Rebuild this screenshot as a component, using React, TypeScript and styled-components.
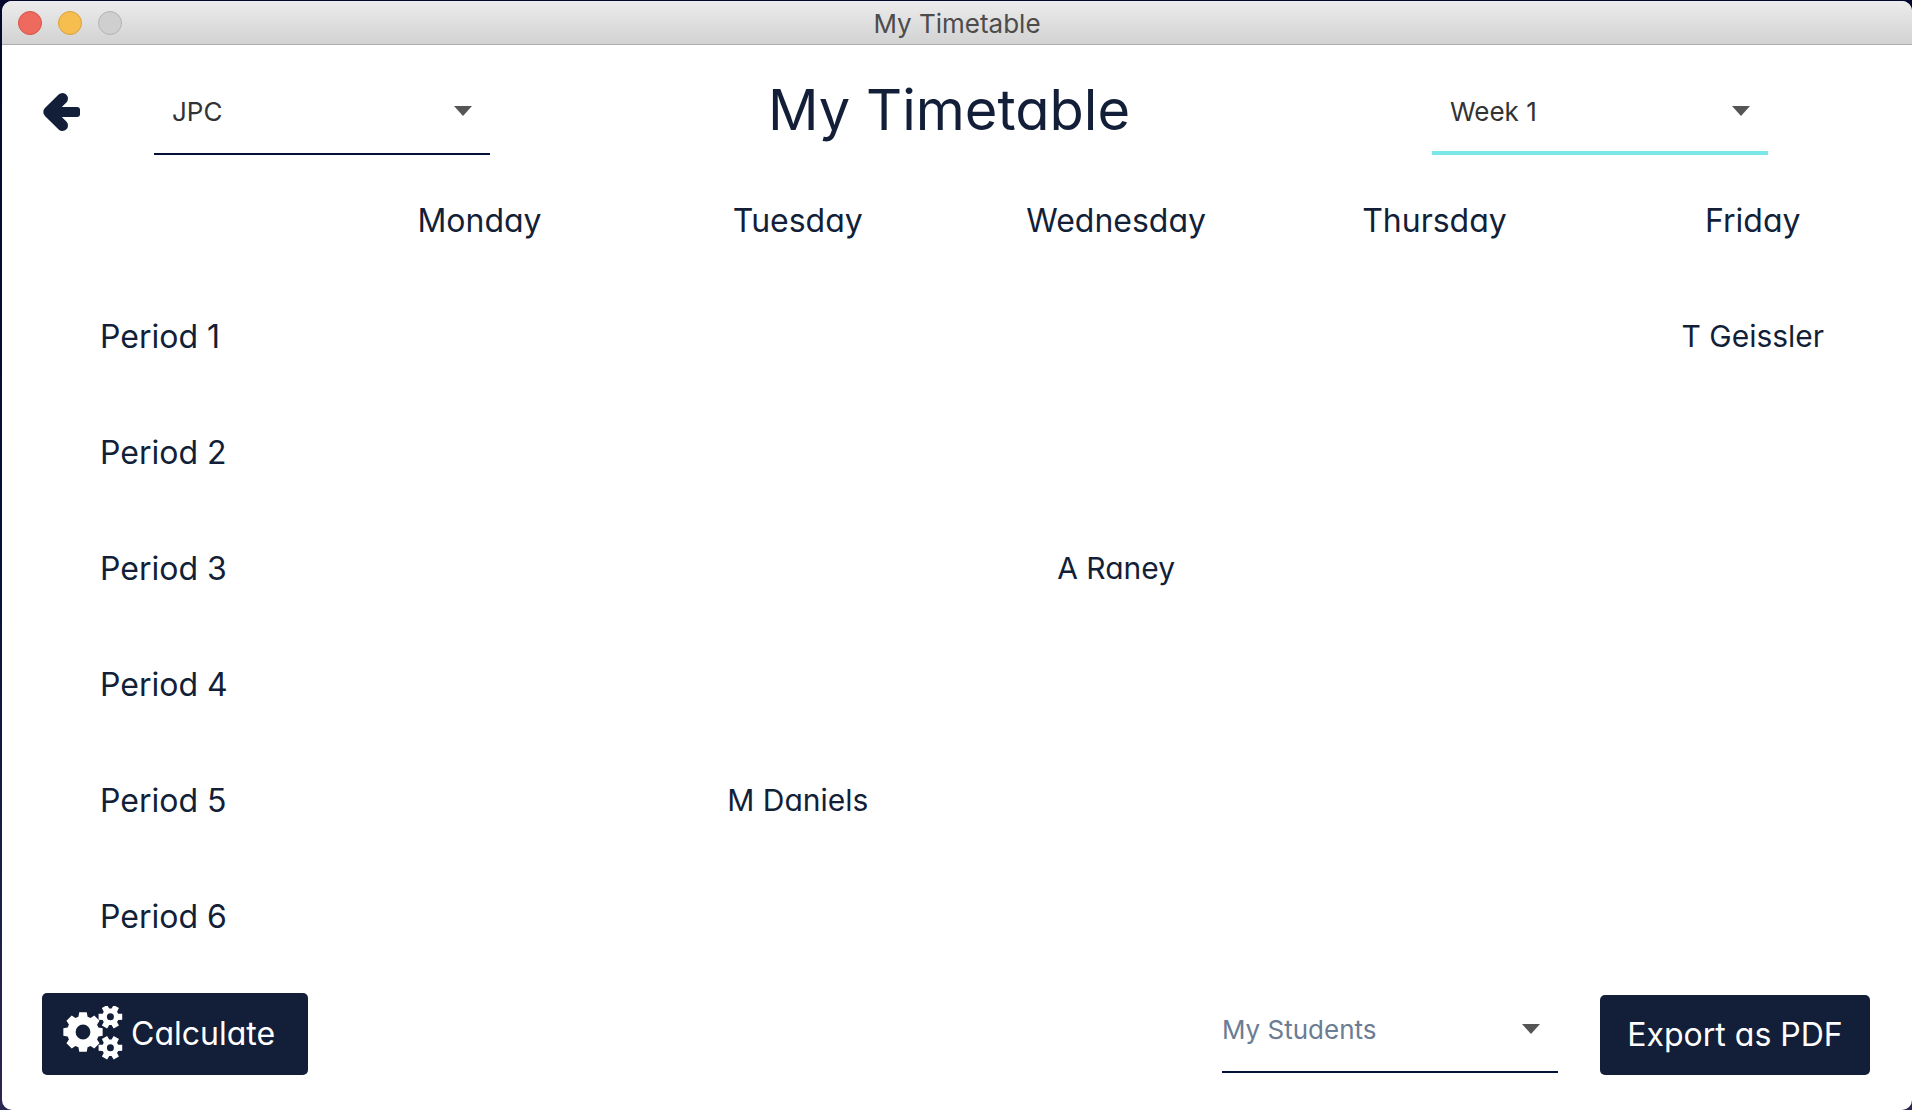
import React from "react";
import styled, { createGlobalStyle } from "styled-components";

const NAVY = "#131f38";
const DISPLAY = '"Century Gothic", Inter, "Open Sans", sans-serif';
const BODY = 'Inter, Roboto, "Liberation Sans", sans-serif';

const GlobalStyle = createGlobalStyle`
  *, *::before, *::after { box-sizing: border-box; }
  html, body, #root { height: 100%; }
  body { margin: 0; background: #04082c; font-family: ${BODY}; }
`;

const Desktop = styled.div`
  min-height: 100%;
  display: flex;
  padding: 1px 0 0 2px;
  background: linear-gradient(180deg, #04082c 0%, #06103c 50%, #2a2750 100%);
`;

const Window = styled.div`
  flex: 1;
  display: flex;
  flex-direction: column;
  min-width: 0;
  border-radius: 10px;
  overflow: hidden;
  background: #fff;
`;

const TitleBar = styled.header`
  display: grid;
  grid-template-columns: 1fr auto 1fr;
  align-items: center;
  height: 44px;
  padding: 0 16px;
  background: linear-gradient(180deg, #ececec, #d2d2d2);
  border-bottom: 1px solid #aeaeae;
`;

const Lights = styled.div`
  display: flex;
  gap: 16px;
`;

const Light = styled.button<{ $fill: string; $edge: string }>`
  width: 24px;
  height: 24px;
  padding: 0;
  border: 1px solid ${(p) => p.$edge};
  border-radius: 50%;
  background: ${(p) => p.$fill};
`;

const WindowTitle = styled.span`
  padding-top: 2px;
  font: 400 26px/32px ${BODY};
  color: #4c4c4c;
`;

const Toolbar = styled.div`
  display: flex;
  align-items: center;
  justify-content: space-between;
  height: 117px;
  padding: 15px 144px 0 40px;
`;

const ToolbarStart = styled.div`
  display: flex;
  align-items: center;
  gap: 72px;
`;

const IconButton = styled.button`
  display: flex;
  padding: 0;
  border: 0;
  background: none;
  color: ${NAVY};
`;

const PageTitle = styled.h1`
  margin: 0;
  padding: 0 24px 2px 0;
  font: 400 56px/68px ${DISPLAY};
  font-feature-settings: "cv11";
  color: ${NAVY};
`;

const Field = styled.label`
  display: grid;
  grid-template-columns: 1fr auto;
  align-items: center;
  width: 336px;
`;

const Select = styled.select<{ $focused?: boolean; $prompt?: boolean }>`
  grid-area: 1 / 1 / 2 / 3;
  appearance: none;
  width: 100%;
  height: 88px;
  padding: 2px 48px 0 ${(p) => (p.$prompt ? 0 : 18)}px;
  border: 0;
  border-radius: 0;
  background: linear-gradient(
      ${(p) => (p.$focused ? "#79e6e8, #79e6e8" : "#04123a, #04123a")}
    )
    bottom / 100% ${(p) => (p.$focused ? 4 : 2)}px no-repeat;
  font: 400 26px/32px ${BODY};
  color: ${(p) => (p.$prompt ? "#6b7c93" : "#333")};
  outline: none;
`;

const Caret = styled.span`
  grid-area: 1 / 2;
  margin-right: 18px;
  border: 9px solid transparent;
  border-top: 10px solid #555;
  border-bottom: 0;
  pointer-events: none;
`;

const Timetable = styled.table`
  width: 100%;
  table-layout: fixed;
  border-collapse: collapse;
  font-family: ${DISPLAY};
  font-feature-settings: "cv11";
  font-weight: 400;
  color: ${NAVY};
`;

const Row = styled.tr`
  height: 116px;
`;

const DayHeading = styled.th`
  padding: 0;
  font-size: 32px;
  font-weight: inherit;
`;

const PeriodHeading = styled.th`
  padding: 0 0 0 98px;
  font-size: 32px;
  font-weight: inherit;
  text-align: left;
`;

const Slot = styled.td`
  padding: 0;
  font-size: 30px;
  text-align: center;
`;

const Footer = styled.footer`
  display: flex;
  align-items: flex-end;
  justify-content: space-between;
  margin-top: auto;
  padding: 0 42px 35px 40px;
`;

const FooterEnd = styled.div`
  display: flex;
  align-items: flex-end;
  gap: 42px;

  ${Field} {
    margin-bottom: 2px;
  }
`;

const ActionButton = styled.button<{ $withIcon?: boolean }>`
  display: flex;
  align-items: center;
  justify-content: ${(p) => (p.$withIcon ? "flex-start" : "center")};
  gap: 8px;
  width: ${(p) => (p.$withIcon ? 266 : 270)}px;
  height: ${(p) => (p.$withIcon ? 82 : 80)}px;
  padding: 0 ${(p) => (p.$withIcon ? 21 : 0)}px;
  border: 0;
  border-radius: 5px;
  background: ${NAVY};
  color: #fff;
  font: 400 32px/40px ${DISPLAY};
  font-feature-settings: "cv11";
  white-space: nowrap;
`;

const days = ["Monday", "Tuesday", "Wednesday", "Thursday", "Friday"];
const lessons: Record<string, string> = {
  "1-Friday": "T Geissler",
  "3-Wednesday": "A Raney",
  "5-Tuesday": "M Daniels",
};

/** Outline of a cog with tapered teeth, starting with a tooth pointing right. */
function cogPath(cx: number, cy: number, outer: number, root: number, hole: number, teeth: number) {
  const step = (Math.PI * 2) / teeth;
  const at = (r: number, a: number) =>
    `${(cx + r * Math.cos(a)).toFixed(2)} ${(cy + r * Math.sin(a)).toFixed(2)}`;
  const points: string[] = [];
  for (let i = 0; i < teeth; i++) {
    const a = i * step;
    points.push(at(root, a - step * 0.37), at(outer, a - step * 0.24), at(outer, a + step * 0.24), at(root, a + step * 0.37));
  }
  return `M${points.join("L")}Z M${cx - hole} ${cy}a${hole} ${hole} 0 1 0 ${hole * 2} 0a${hole} ${hole} 0 1 0 ${-hole * 2} 0Z`;
}

const CogsIcon = () => (
  <svg width="60" height="56" viewBox="0 0 60 56" fill="#fff" fillRule="evenodd" aria-hidden="true">
    <path d={cogPath(20, 26, 20, 16, 7.4, 8)} />
    <path d={cogPath(47.4, 10.8, 12.2, 8.4, 3.5, 6)} />
    <path d={cogPath(47.4, 41.8, 12.2, 8.4, 3.5, 6)} />
  </svg>
);

const BackIcon = () => (
  <svg width="40" height="40" viewBox="0 0 40 40" fill="currentColor" aria-hidden="true">
    <path d="M20.5 7.5 6.8 21l13.7 13.5" fill="none" stroke="currentColor" strokeWidth="11" strokeLinecap="round" strokeLinejoin="round" />
    <rect x="8" y="16" width="30" height="10" rx="3" />
  </svg>
);

export default function App() {
  return (
    <>
      <GlobalStyle />
      <Desktop>
        <Window>
          <TitleBar>
            <Lights>
              <Light aria-label="Close" $fill="#ee6a5f" $edge="#d5544a" />
              <Light aria-label="Minimise" $fill="#f5be4f" $edge="#d8a13c" />
              <Light aria-label="Zoom" $fill="#cfcfcf" $edge="#b3b3b3" />
            </Lights>
            <WindowTitle>My Timetable</WindowTitle>
          </TitleBar>
          <Toolbar>
            <ToolbarStart>
              <IconButton aria-label="Back">
                <BackIcon />
              </IconButton>
              <Field>
                <Select aria-label="Teacher">
                  <option>JPC</option>
                </Select>
                <Caret />
              </Field>
            </ToolbarStart>
            <PageTitle>My Timetable</PageTitle>
            <Field>
              <Select aria-label="Week" $focused>
                <option>Week 1</option>
                <option>Week 2</option>
              </Select>
              <Caret />
            </Field>
          </Toolbar>
          <Timetable>
            <thead>
              <Row>
                <td />
                {days.map((day) => (
                  <DayHeading key={day} scope="col">{day}</DayHeading>
                ))}
              </Row>
            </thead>
            <tbody>
              {[1, 2, 3, 4, 5, 6].map((period) => (
                <Row key={period}>
                  <PeriodHeading scope="row">Period {period}</PeriodHeading>
                  {days.map((day) => (
                    <Slot key={day}>{lessons[`${period}-${day}`]}</Slot>
                  ))}
                </Row>
              ))}
            </tbody>
          </Timetable>
          <Footer>
            <ActionButton $withIcon>
              <CogsIcon />
              Calculate
            </ActionButton>
            <FooterEnd>
              <Field>
                <Select aria-label="My Students" $prompt>
                  <option>My Students</option>
                </Select>
                <Caret />
              </Field>
              <ActionButton>Export as PDF</ActionButton>
            </FooterEnd>
          </Footer>
        </Window>
      </Desktop>
    </>
  );
}
